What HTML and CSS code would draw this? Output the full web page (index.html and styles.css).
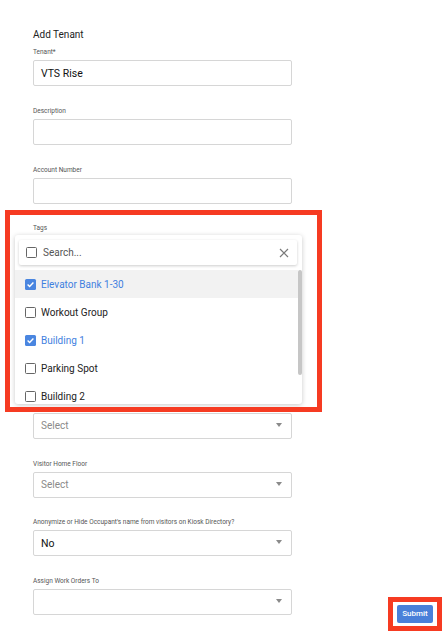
FILE: index.html
```html
<!DOCTYPE html>
<html lang="en">
<head>
<meta charset="utf-8">
<title>Add Tenant</title>
<link rel="stylesheet" href="styles.css">
</head>
<body>
<div class="page">
  <form class="form">
    <h1 class="title">Add Tenant</h1>

    <div class="field">
      <label class="label">Tenant*</label>
      <div class="input"><span class="value">VTS Rise</span></div>
    </div>

    <div class="field">
      <label class="label">Description</label>
      <div class="input"></div>
    </div>

    <div class="field">
      <label class="label">Account Number</label>
      <div class="input"></div>
    </div>

    <div class="field field-tags">
      <label class="label">Tags</label>
      <div class="input"></div>

      <div class="highlight highlight-tags"></div>

      <div class="menu">
        <div class="menu-search">
          <span class="check"></span>
          <span class="search-text">Search...</span>
          <svg class="clear" width="10" height="10" viewBox="0 0 10 10">
            <path d="M1 1L9 9M9 1L1 9" stroke="#7a7a7a" stroke-width="1.2" fill="none"/>
          </svg>
        </div>
        <ul class="options">
          <li class="option option-active option-selected">
            <span class="check check-on"><svg width="11" height="11" viewBox="0 0 11 11"><path d="M2.6 5.6L4.6 7.5L8.4 3.5" stroke="#fff" stroke-width="1.4" fill="none"/></svg></span>
            <span>Elevator Bank 1-30</span>
          </li>
          <li class="option">
            <span class="check"></span>
            <span>Workout Group</span>
          </li>
          <li class="option option-selected">
            <span class="check check-on"><svg width="11" height="11" viewBox="0 0 11 11"><path d="M2.6 5.6L4.6 7.5L8.4 3.5" stroke="#fff" stroke-width="1.4" fill="none"/></svg></span>
            <span>Building 1</span>
          </li>
          <li class="option">
            <span class="check"></span>
            <span>Parking Spot</span>
          </li>
          <li class="option">
            <span class="check"></span>
            <span>Building 2</span>
          </li>
        </ul>
        <div class="scrollbar"></div>
      </div>
    </div>

    <div class="field">
      <label class="label"></label>
      <div class="input"></div>
    </div>

    <div class="field">
      <label class="label"></label>
      <div class="input"></div>
    </div>

    <div class="field">
      <label class="label"></label>
      <div class="input select"><span class="placeholder">Select</span><span class="caret"></span></div>
    </div>

    <div class="field">
      <label class="label">Visitor Home Floor</label>
      <div class="input select"><span class="placeholder">Select</span><span class="caret"></span></div>
    </div>

    <div class="field">
      <label class="label">Anonymize or Hide Occupant's name from visitors on Kiosk Directory?</label>
      <div class="input select"><span class="value">No</span><span class="caret"></span></div>
    </div>

    <div class="field">
      <label class="label">Assign Work Orders To</label>
      <div class="input select"><span class="value"></span><span class="caret"></span></div>
    </div>
  </form>

  <div class="actions">
    <button class="submit" type="button">Submit</button>
  </div>
</div>
</body>
</html>
```

FILE: styles.css
```css
* {
  box-sizing: border-box;
}

html, body {
  margin: 0;
  padding: 0;
  background: #fff;
}

body {
  font-family: Roboto, "Noto Sans", "Liberation Sans", sans-serif;
  color: #222;
}

.page {
  display: flex;
  height: 632px;
  overflow: hidden;
}

.form {
  width: 259px;
  margin: 0 0 0 33px;
  padding-top: 29px;
  display: flex;
  flex-direction: column;
  gap: 19.8px;
}

.title {
  margin: 0 0 -13.8px 0;
  font-size: 10px;
  line-height: 12px;
  font-weight: 400;
  color: #222;
}

.field {
  position: relative;
  display: flex;
  flex-direction: column;
  gap: 3px;
}

.label {
  display: block;
  height: 10px;
  font-size: 6.5px;
  line-height: 10px;
  color: #555;
  white-space: nowrap;
}

.input {
  height: 26px;
  border: 1px solid #d6d6d6;
  border-radius: 2px;
  display: flex;
  align-items: center;
  padding: 0 8px 0 7px;
  background: #fff;
}

.value {
  font-size: 10.5px;
  font-weight: 400;
  color: #111;
}

.placeholder {
  font-size: 10px;
  color: #8a8a8a;
}

.select {
  justify-content: space-between;
}

.caret {
  width: 0;
  height: 0;
  border-left: 3.5px solid transparent;
  border-right: 3.5px solid transparent;
  border-top: 4px solid #8a8a8a;
  margin-right: 1px;
  margin-top: -2px;
}

/* tag picker dropdown */
.menu {
  position: absolute;
  z-index: 2;
  left: -18px;
  top: 12px;
  width: 287px;
  height: 169px;
  background: #fff;
  border-radius: 3px;
  box-shadow: 0 1px 5px rgba(0, 0, 0, 0.22);
  overflow: hidden;
  padding: 5px 0 0 0;
}

.menu-search {
  height: 25px;
  margin: 0 5px 5px 4px;
  border-radius: 2px;
  box-shadow: 0 1px 3px rgba(0, 0, 0, 0.2);
  display: flex;
  align-items: center;
  padding: 0 8px 0 7px;
}

.search-text {
  margin-left: 6px;
  flex: 1;
  font-size: 10px;
  color: #555;
}

.clear {
  display: block;
}

.check {
  width: 11px;
  height: 11px;
  flex: none;
  border: 1.4px solid #666;
  border-radius: 1.5px;
  display: inline-flex;
  align-items: center;
  justify-content: center;
  background: #fff;
}

.check-on {
  border: none;
  background: #4a86e0;
}

.check-on svg {
  display: block;
}

.options {
  list-style: none;
  margin: 0;
  padding: 0;
  width: 283px;
}

.option {
  height: 28px;
  display: flex;
  align-items: center;
  gap: 5px;
  padding-left: 10px;
  font-size: 10px;
  color: #222;
}

.option-active {
  background: #f2f2f2;
}

.option-selected {
  color: #3f7fe0;
}

.scrollbar {
  position: absolute;
  right: 0;
  top: 35px;
  width: 4px;
  height: 105px;
  border-radius: 2px;
  background: #c6c6c6;
}

/* red outline markers */
.highlight {
  position: absolute;
  z-index: 3;
  border: 5px solid #f63b22;
  pointer-events: none;
}

.highlight-tags {
  left: -28px;
  top: -13px;
  width: 317px;
  height: 202px;
}

.actions {
  align-self: flex-end;
  margin: 0 3px 1px auto;
  border: 5px solid #f63b22;
  padding: 3px 4px;
}

.submit {
  display: block;
  width: 36px;
  height: 18px;
  padding: 0;
  border: none;
  border-radius: 2px;
  background: #4a80d9;
  color: #fff;
  font-family: Roboto, "Noto Sans", "Liberation Sans", sans-serif;
  font-size: 8px;
  font-weight: 500;
  line-height: 18px;
  text-align: center;
}
```
